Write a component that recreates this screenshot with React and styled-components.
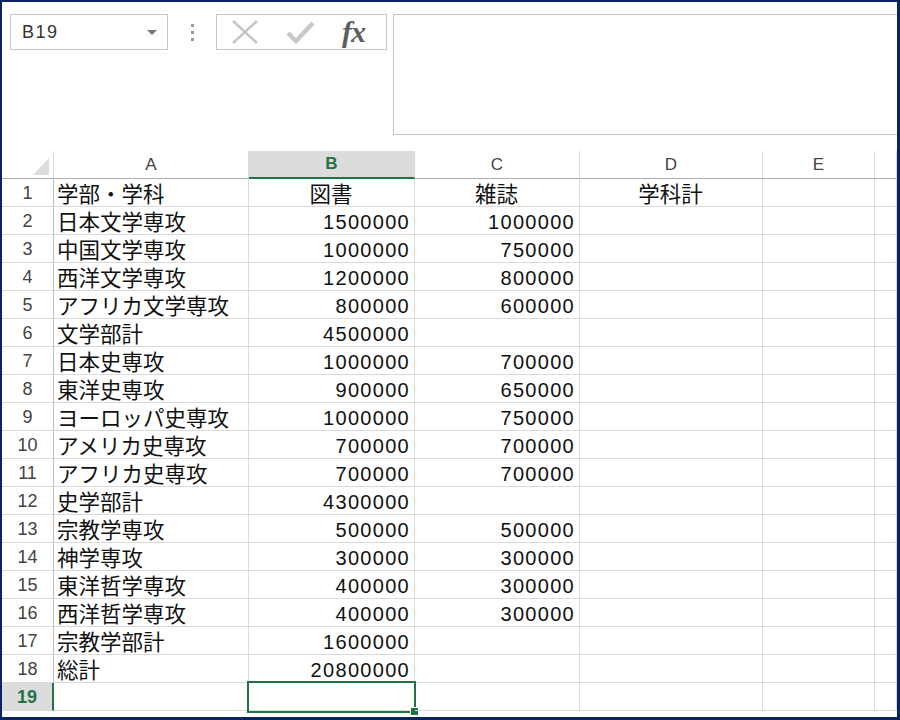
import React from "react";
import styled, { createGlobalStyle } from "styled-components";

const GREEN = "#217346";

const GlobalStyle = createGlobalStyle`
  html, body {
    margin: 0;
    padding: 0;
    background: #fff;
  }
  body {
    font-family: "Liberation Sans", "Noto Sans CJK JP", sans-serif;
  }
`;

const Frame = styled.div`
  width: 900px;
  height: 720px;
  box-sizing: border-box;
  border: 2px solid #0b2360;
  border-right-width: 3px;
  border-bottom-width: 3px;
  background: #fff;
  overflow: hidden;
  display: flex;
  flex-direction: column;
`;

const TopBar = styled.div`
  height: 149px;
  flex-shrink: 0;
  box-sizing: border-box;
  padding: 12px 0 0 8px;
  display: flex;
  align-items: flex-start;
`;

const NameBox = styled.div`
  width: 158px;
  height: 36px;
  box-sizing: border-box;
  border: 1px solid #c6c6c6;
  display: flex;
  align-items: center;
  justify-content: space-between;
  padding: 0 10px 0 11px;
  font-size: 18px;
  color: #333;
  letter-spacing: 1.5px;
`;

const DropArrow = styled.span`
  width: 0;
  height: 0;
  border-left: 5px solid transparent;
  border-right: 5px solid transparent;
  border-top: 5px solid #777;
`;

const Dots = styled.div`
  width: 48px;
  height: 36px;
  display: flex;
  flex-direction: column;
  align-items: center;
  justify-content: center;
  gap: 4px;

  span {
    width: 3px;
    height: 3px;
    background: #9a9a9a;
  }
`;

const FxBox = styled.div`
  width: 171px;
  height: 36px;
  box-sizing: border-box;
  border: 1px solid #c6c6c6;
  display: flex;
  align-items: center;
  padding: 0 0 0 14px;
  gap: 26px;
`;

const FxText = styled.span`
  font-family: "Liberation Serif", "DejaVu Serif", serif;
  font-style: italic;
  font-weight: bold;
  font-size: 30px;
  color: #5e5e5e;
  margin-left: 1px;
  letter-spacing: -1px;
`;

const FormulaBar = styled.div`
  flex: 1;
  margin-left: 6px;
  margin-right: -10px;
  height: 121px;
  box-sizing: border-box;
  border: 1px solid #c6c6c6;
`;

const Grid = styled.div`
  display: grid;
  grid-template-columns: 52px 195px 166px 165px 183px 112px 1fr;
`;

const HeadCell = styled.div`
  height: 28px;
  box-sizing: border-box;
  border-bottom: ${(p) => (p.$active ? `2px solid ${GREEN}` : "1px solid #ababab")};
  border-right: 1px solid #dadada;
  background: ${(p) => (p.$active ? "#dcdcdc" : "#fff")};
  color: ${(p) => (p.$active ? GREEN : "#444")};
  font-weight: ${(p) => (p.$active ? "bold" : "normal")};
  font-size: 17px;
  display: flex;
  align-items: center;
  justify-content: center;
  position: relative;
`;

const Corner = styled.div`
  position: absolute;
  right: 4px;
  bottom: 3px;
  width: 0;
  height: 0;
  border-left: 16px solid transparent;
  border-bottom: 17px solid #dcdcdc;
`;

const RowHead = styled.div`
  height: 28px;
  box-sizing: border-box;
  border-bottom: 1px solid #dadada;
  border-right: ${(p) => (p.$active ? `2px solid ${GREEN}` : "1px solid #bdbdbd")};
  background: ${(p) => (p.$active ? "#dcdcdc" : "#fff")};
  color: ${(p) => (p.$active ? GREEN : "#444")};
  font-weight: ${(p) => (p.$active ? "bold" : "normal")};
  font-size: 18px;
  padding-top: 2px;
  display: flex;
  align-items: center;
  justify-content: center;
`;

const Cell = styled.div`
  height: 28px;
  box-sizing: border-box;
  border-bottom: 1px solid #dadada;
  border-right: 1px solid #dadada;
  display: flex;
  align-items: center;
  justify-content: ${(p) =>
    p.$align === "right" ? "flex-end" : p.$align === "center" ? "center" : "flex-start"};
  padding: ${(p) => (p.$num ? "3px 4px 0 3px" : "0 4px 0 3px")};
  color: #111;
  white-space: nowrap;
  position: relative;
  font-family: ${(p) =>
    p.$num ? `"Liberation Sans", sans-serif` : `"Noto Sans CJK JP", sans-serif`};
  font-size: ${(p) => (p.$num ? "20px" : "21.5px")};
  letter-spacing: ${(p) => (p.$num ? "1.3px" : "0")};
`;

const Selection = styled.div`
  position: absolute;
  top: -2px;
  left: -2px;
  right: -2px;
  bottom: -3px;
  border: 2px solid ${GREEN};
  pointer-events: none;
`;

const Handle = styled.div`
  position: absolute;
  right: -5px;
  bottom: -5px;
  width: 7px;
  height: 7px;
  background: ${GREEN};
  border: 1px solid #fff;
`;

const cols = ["A", "B", "C", "D", "E", ""];

const rows = [
  ["学部・学科", "図書", "雑誌", "学科計"],
  ["日本文学専攻", "1500000", "1000000"],
  ["中国文学専攻", "1000000", "750000"],
  ["西洋文学専攻", "1200000", "800000"],
  ["アフリカ文学専攻", "800000", "600000"],
  ["文学部計", "4500000", ""],
  ["日本史専攻", "1000000", "700000"],
  ["東洋史専攻", "900000", "650000"],
  ["ヨーロッパ史専攻", "1000000", "750000"],
  ["アメリカ史専攻", "700000", "700000"],
  ["アフリカ史専攻", "700000", "700000"],
  ["史学部計", "4300000", ""],
  ["宗教学専攻", "500000", "500000"],
  ["神学専攻", "300000", "300000"],
  ["東洋哲学専攻", "400000", "300000"],
  ["西洋哲学専攻", "400000", "300000"],
  ["宗教学部計", "1600000", ""],
  ["総計", "20800000", ""],
  [],
];

const XIcon = () => (
  <svg width="28" height="26" viewBox="0 0 28 26">
    <path d="M2 2 L26 24 M26 2 L2 24" stroke="#c4c4c4" strokeWidth="2.4" fill="none" />
  </svg>
);

const CheckIcon = () => (
  <svg width="30" height="24" viewBox="0 0 30 24">
    <path d="M3 13 L11 21 L28 3" stroke="#c8c8c8" strokeWidth="4.5" fill="none" />
  </svg>
);

const App = () => {
  return (
    <>
      <GlobalStyle />
      <Frame>
        <TopBar>
          <NameBox>
            <span>B19</span>
            <DropArrow />
          </NameBox>
          <Dots>
            <span />
            <span />
            <span />
          </Dots>
          <FxBox>
            <XIcon />
            <CheckIcon />
            <FxText>fx</FxText>
          </FxBox>
          <FormulaBar />
        </TopBar>
        <Grid>
          <HeadCell>
            <Corner />
          </HeadCell>
          {cols.map((c, i) => (
            <HeadCell key={i} $active={c === "B"}>
              {c}
            </HeadCell>
          ))}
          {rows.map((r, ri) => {
            const n = ri + 1;
            const header = ri === 0;
            return (
              <React.Fragment key={n}>
                <RowHead $active={n === 19}>{n}</RowHead>
                <Cell>{r[0] || ""}</Cell>
                <Cell $num={!header} $align={header ? "center" : "right"}>
                  {r[1] || ""}
                  {n === 19 && (
                    <Selection>
                      <Handle />
                    </Selection>
                  )}
                </Cell>
                <Cell $num={!header} $align={header ? "center" : "right"}>
                  {r[2] || ""}
                </Cell>
                <Cell $align="center">{r[3] || ""}</Cell>
                <Cell />
                <Cell />
              </React.Fragment>
            );
          })}
        </Grid>
      </Frame>
    </>
  );
};

export default App;
